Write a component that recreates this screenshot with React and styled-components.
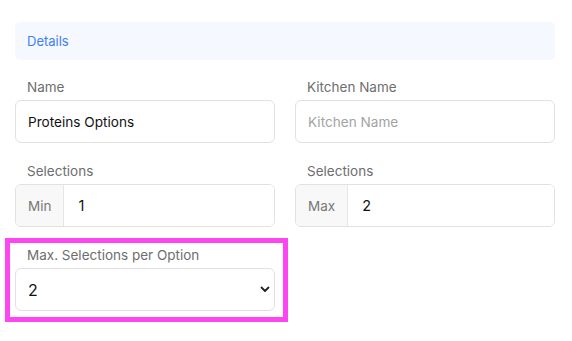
import React from "react";
import styled, { createGlobalStyle } from "styled-components";

const GlobalStyle = createGlobalStyle`
  body {
    margin: 0;
    background: #ffffff;
    font-family: Inter, "Noto Sans", sans-serif;
    -webkit-font-smoothing: antialiased;
  }
`;

const Page = styled.div`
  width: 572px;
  height: 341px;
  padding: 22px 17px 0 15px;
  box-sizing: border-box;
`;

const SectionHeader = styled.div`
  height: 38px;
  display: flex;
  align-items: center;
  padding: 0 12px;
  background: #f5f8fe;
  border-radius: 5px;
  color: #3f80f2;
  font-size: 13px;
`;

const Grid = styled.div`
  display: grid;
  grid-template-columns: 260px 260px;
  column-gap: 20px;
  row-gap: 19px;
  margin-top: 18px;
`;

const Field = styled.div`
  position: relative;
  display: flex;
  flex-direction: column;
`;

const Highlight = styled.span`
  position: absolute;
  top: -8px;
  left: -10px;
  right: -13px;
  bottom: -11px;
  border: 5px solid #fd46ef;
  pointer-events: none;
`;

const Label = styled.label`
  font-size: 13.5px;
  line-height: 18px;
  color: #6e6e6e;
  padding-left: 12px;
  margin-bottom: 4px;
`;

const Input = styled.input`
  height: 43px;
  box-sizing: border-box;
  border: 1px solid #e1e1e1;
  border-radius: 6px;
  padding: 0 12px;
  font-family: inherit;
  font-size: 13.6px;
  color: #111;
  outline: none;
  &::placeholder {
    color: #a3a3a3;
  }
`;

const Group = styled.div`
  display: flex;
  height: 43px;
  box-sizing: border-box;
  border: 1px solid #e1e1e1;
  border-radius: 6px;
  overflow: hidden;
`;

const Addon = styled.span`
  display: flex;
  align-items: center;
  padding: 0 12px;
  background: #f8f8f8;
  border-right: 1px solid #e6e6e6;
  color: #777;
  font-size: 13.5px;
`;

const GroupInput = styled.input`
  flex: 1;
  min-width: 0;
  border: none;
  padding: 0 14px;
  font-family: inherit;
  font-size: 14.5px;
  color: #111;
  outline: none;
`;

const SelectWrap = styled.div`
  position: relative;
  height: 43px;
  box-sizing: border-box;
  border: 1px solid #e1e1e1;
  border-radius: 6px;
  display: flex;
  align-items: center;
  padding: 0 4px 0 12px;
`;

const SelectValue = styled.span`
  flex: 1;
  font-size: 16px;
  color: #111;
`;

const Chevron = () => (
  <svg width="10" height="7" viewBox="0 0 10 7">
    <path d="M1.5 1.5 L5 5 L8.5 1.5" fill="none" stroke="#222" strokeWidth="1.8" strokeLinecap="round" strokeLinejoin="round" />
  </svg>
);

export default function App() {
  return (
    <>
      <GlobalStyle />
      <Page>
        <SectionHeader>Details</SectionHeader>
        <Grid>
          <Field>
            <Label>Name</Label>
            <Input defaultValue="Proteins Options" />
          </Field>
          <Field>
            <Label>Kitchen Name</Label>
            <Input placeholder="Kitchen Name" />
          </Field>
          <Field>
            <Label>Selections</Label>
            <Group>
              <Addon>Min</Addon>
              <GroupInput defaultValue="1" />
            </Group>
          </Field>
          <Field>
            <Label>Selections</Label>
            <Group>
              <Addon>Max</Addon>
              <GroupInput defaultValue="2" />
            </Group>
          </Field>
          <Field>
            <Highlight />
            <Label>Max. Selections per Option</Label>
            <SelectWrap>
              <SelectValue>2</SelectValue>
              <Chevron />
            </SelectWrap>
          </Field>
        </Grid>
      </Page>
    </>
  );
}
